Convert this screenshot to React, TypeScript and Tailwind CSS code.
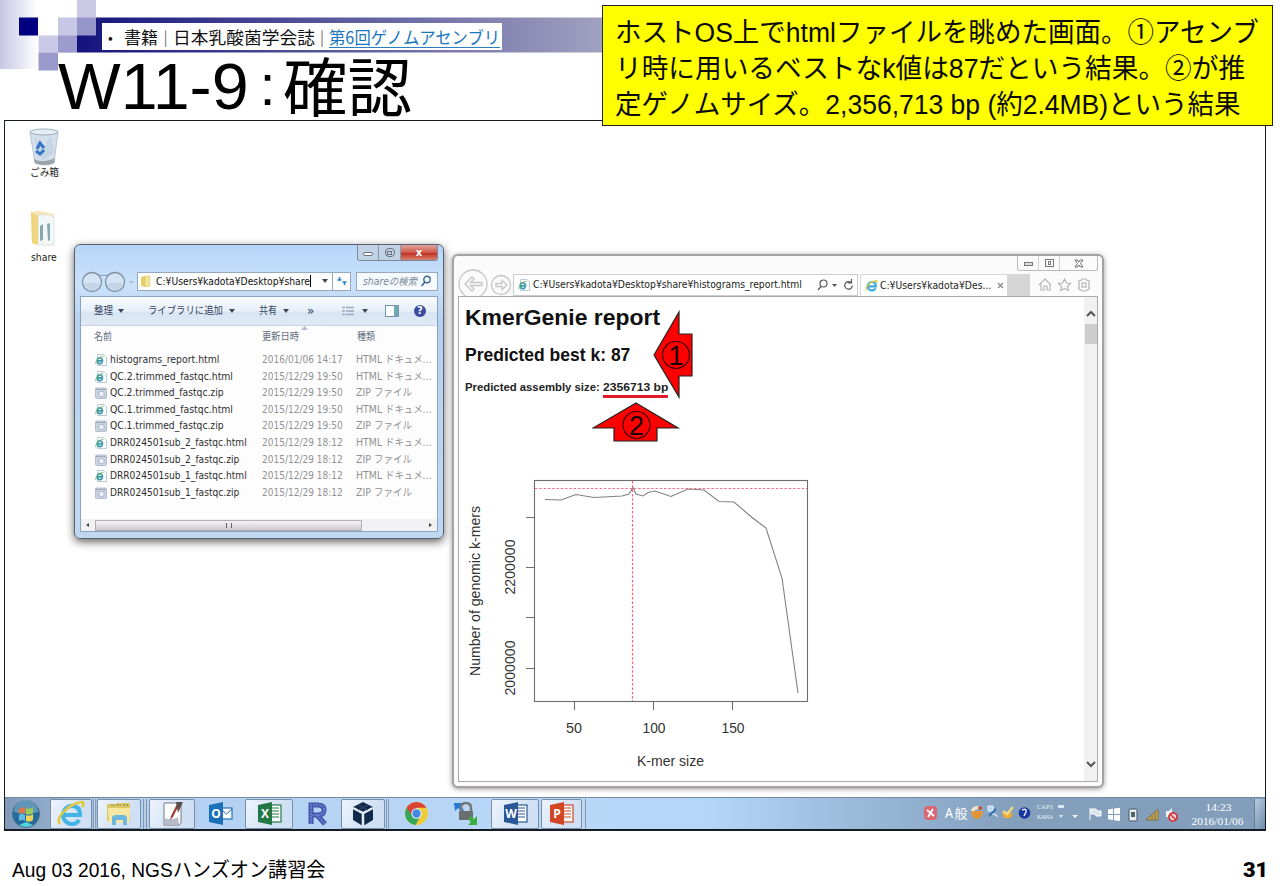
import { useLayoutEffect, useRef, useState, type ReactNode } from "react";

const GOTHIC = "font-['Liberation_Sans','Noto_Sans_CJK_JP',sans-serif]";
const CJK = "font-['Noto_Sans_CJK_JP',sans-serif]";
const UI = "font-['DejaVu_Sans','Noto_Sans_CJK_JP',sans-serif]";

/* One line of text, condensed or widened to fill exactly `w` pixels. */
function Fit({ w, className = "", children }: { w: number; className?: string; children: ReactNode }) {
  const ref = useRef<HTMLSpanElement>(null);
  const [k, setK] = useState(1);
  useLayoutEffect(() => {
    if (ref.current) setK(w / ref.current.offsetWidth);
  }, [w]);
  return (
    <span className={`block shrink-0 ${className}`} style={{ width: w }}>
      <span ref={ref} className="inline-block origin-left whitespace-nowrap" style={{ transform: `scaleX(${k})` }}>
        {children}
      </span>
    </span>
  );
}

function Caret() {
  return <svg width="6" height="4" viewBox="0 0 6 4" className="shrink-0"><path d="M0 0h6L3 4z" fill="#3c4654" /></svg>;
}

function IeGlyph({ size = 12 }: { size?: number }) {
  return (
    <svg width={size} height={size} viewBox="0 0 24 24" className="shrink-0">
      <path d="M5 13.500h15c.3-5-3-8-7.400-8S5 9 5 13.200 8.500 21 12.800 21c3 0 5.500-1.600 6.600-4" fill="none" stroke="#3fa9dc" strokeWidth="4" />
      <path d="M3 21C-1 17 9 4 21 3c2 0 1 3 0 4" fill="none" stroke="#e3c93e" strokeWidth="2.200" />
    </svg>
  );
}

function FileIcon({ zip }: { zip: boolean }) {
  return zip ? (
    <svg width="12" height="12" viewBox="0 0 12 12" className="shrink-0">
      <rect x=".5" y="1" width="11" height="10.500" rx="1" fill="#c9d2df" stroke="#a9b4c5" strokeWidth=".8" />
      <path d="M1 2.500h10" stroke="#8792a6" strokeDasharray="1.500 1" /><rect x="4" y="4.500" width="5" height="5" rx="1.500" fill="#eef2f8" stroke="#9eabc0" strokeWidth=".8" />
    </svg>
  ) : (
    <svg width="12" height="12" viewBox="0 0 12 12" className="shrink-0">
      <path d="M2.500.5h6.500l2.500 2.500v8.500h-9z" fill="#fbfdff" stroke="#a9bccb" strokeWidth=".8" />
      <path d="M2.500 6.800h5c0-4.200-5.300-3.700-5.300.2 0 3 4.300 3.500 5 1" fill="none" stroke="#3c9aa8" strokeWidth="1.700" />
      <path d="M.8 10C0 7 4 2.500 8.500 2.300" fill="none" stroke="#7fbf62" strokeWidth=".9" />
    </svg>
  );
}

const FILES: [string, number, string][] = [
  ["histograms_report.html", 109, "2016/01/06 14:17"],
  ["QC.2.trimmed_fastqc.html", 123, "2015/12/29 19:50"],
  ["QC.2.trimmed_fastqc.zip", 114, "2015/12/29 19:50"],
  ["QC.1.trimmed_fastqc.html", 123, "2015/12/29 19:50"],
  ["QC.1.trimmed_fastqc.zip", 114, "2015/12/29 19:50"],
  ["DRR024501sub_2_fastqc.html", 137, "2015/12/29 18:12"],
  ["DRR024501sub_2_fastqc.zip", 129, "2015/12/29 18:12"],
  ["DRR024501sub_1_fastqc.html", 137, "2015/12/29 18:12"],
  ["DRR024501sub_1_fastqc.zip", 129, "2015/12/29 18:12"],
];

function Header() {
  return (
    <header className="relative h-[120px] shrink-0">
      <svg className="absolute left-0 top-0" width="1280" height="71">
        <defs>
          <linearGradient id="fade"><stop offset="0" stopColor="#c6c6e6" /><stop offset="1" stopColor="#fff" /></linearGradient>
          <linearGradient id="bar"><stop offset="0" stopColor="#13137c" /><stop offset=".44" stopColor="#a2a2c0" /><stop offset="1" stopColor="#fff" /></linearGradient>
        </defs>
        <rect width="38" height="69" fill="url(#fade)" />
        <rect x="77" y="17.500" width="1203" height="35" fill="url(#bar)" />
        <rect x="19" y="17.500" width="19" height="18" fill="#000080" />
        <rect x="77" width="19" height="18" fill="#cacae7" />
        <rect x="58" y="17.500" width="19" height="35" fill="#c8c8e6" />
        <rect x="77" y="17.500" width="19" height="18" fill="#9696cb" />
        <rect x="38.500" y="35.500" width="19.500" height="17" fill="#cacae7" />
        <rect x="58" y="35.500" width="19" height="17" fill="#9c9ccf" />
        <rect x="38.500" y="52.500" width="19.500" height="18" fill="#9999cc" />
      </svg>
      <div className="relative flex flex-col pt-[23px]">
        <div className={`ml-[102px] flex h-[27px] w-[400px] items-center bg-white pl-[6px] text-[17px] leading-[24px] text-[#111] ${CJK}`}>
          <span className="w-4 text-[14px]">•</span>
          <Fit w={34}>書籍</Fit>
          <span className="w-[15px] text-center text-[15px] text-[#777]">|</span>
          <Fit w={142}>日本乳酸菌学会誌</Fit>
          <span className="w-[14px] text-center text-[15px] text-[#777]">|</span>
          <Fit w={171} className="h-[23px] border-b border-[#2a7fc0] text-[#1975bd]">第6回ゲノムアセンブリ</Fit>
        </div>
        <h1 className={`ml-[58px] flex h-[70px] items-center text-[65px] leading-[70px] text-black ${GOTHIC}`}>
          <Fit w={191} className="translate-y-[2px]">W11-9</Fit>
          <span className="w-[34px] pl-[3px] text-center text-[58px]">:</span>
          <Fit w={129} className={`-translate-y-[2px] text-[64px] ${CJK}`}>確認</Fit>
        </h1>
      </div>
      <aside className={`absolute left-[602px] top-[5px] z-20 flex h-[121px] w-[671px] flex-col border-[1.500px] border-[#222] bg-[#ffff00] pl-[12px] pt-[9px] text-[27px] leading-[36px] text-[#0a0a0a] ${GOTHIC}`}>
        <Fit w={644} className="h-[36px]">ホストOS上でhtmlファイルを眺めた画面。①アセンブ</Fit>
        <Fit w={630} className="h-[36px]">リ時に用いるベストなk値は87だという結果。②が推</Fit>
        <Fit w={626} className="h-[36px]">定ゲノムサイズ。2,356,713 bp (約2.4MB)という結果</Fit>
      </aside>
    </header>
  );
}

function Explorer() {
  return (
    <section className={`absolute left-[69px] top-[123px] flex h-[295px] w-[370px] flex-col rounded-[6px] border-[1.500px] border-[#56626f] bg-[linear-gradient(180deg,#b6d6f8_0,#cbe1fa_40px,#b5d1f0_75px,#c0d8f2_100%)] px-[5px] pb-[6px] shadow-[0_3px_8px_rgba(60,50,50,0.75)] ${UI}`}>
      <div className="flex h-[26px] items-start justify-end">
        <div className="flex h-[16px] w-[81px] overflow-hidden rounded-b-[3px] border border-t-0 border-[#7b8a9c]">
          <span className="flex w-[21px] items-center justify-center border-r border-[#8a9bad] bg-[#c2d2e5]"><i className="mt-[2px] h-[4px] w-[10px] rounded-sm border border-[#68727e] bg-white" /></span>
          <span className="flex w-[22px] items-center justify-center border-r border-[#8a9bad] bg-[#c2d2e5]"><i className="flex h-[9px] w-[10px] items-center justify-center rounded-sm border border-[#68727e]"><i className="h-[4px] w-[5px] border border-[#68727e]" /></i></span>
          <span className="flex flex-1 items-center justify-center bg-[linear-gradient(#e0a49b_0,#d0594a_50%,#bf3322_55%,#d8806f_100%)] text-[10px] font-bold leading-none text-white">x</span>
        </div>
      </div>
      <div className="flex h-[20px] items-center">
        <svg width="57" height="24" viewBox="0 0 57 24" className="shrink-0">
          <path d="M10 5q14 3 25 0" stroke="#8498ab" fill="none" />
          <circle cx="12" cy="13" r="9.500" fill="#d5e4f4" stroke="#7e8f9f" strokeWidth="1.300" /><circle cx="35" cy="13" r="9.500" fill="#d5e4f4" stroke="#7e8f9f" strokeWidth="1.300" />
          <path d="M5 14h14a7 7 0 0 1-14 0M28 14h14a7 7 0 0 1-14 0" fill="#c3d5e7" /><path d="M49 12h5l-2.500 3z" fill="#a6bdd2" />
        </svg>
        <div className="flex h-[19px] w-[214px] items-center border border-[#97aabd] bg-white">
          <svg width="10" height="13" viewBox="0 0 10 13" className="mx-[3px] shrink-0"><path d="M0 2l4-1v11l-4-1z" fill="#e6ce69" /><path d="M4 1h5v10l-5 1z" fill="#f4e39b" stroke="#d6bd5c" strokeWidth=".5" /></svg>
          <Fit w={154} className="ml-[2px] text-[10px] leading-[17px] text-[#111]">C:¥Users¥kadota¥Desktop¥share</Fit>
          <i className="mr-[11px] h-[12px] w-px bg-black" /><Caret />
          <span className="ml-1 flex h-full flex-1 items-center justify-center border-l border-[#97aabd]"><svg width="12" height="10" viewBox="0 0 12 10"><path d="M3.500 1v3h-2M3.500 4h2M8.500 9V6h2M8.500 6h-2" stroke="#277fbd" strokeWidth="1.600" fill="none" /></svg></span>
        </div>
        <div className="ml-[5px] flex h-[19px] flex-1 items-center border border-[#97aabd] bg-[#f6faff] pl-[6px]">
          <Fit w={54} className="text-[10px] italic leading-[17px] text-[#7c8794]">shareの検索</Fit>
          <svg width="12" height="12" viewBox="0 0 12 12" className="ml-[3px]"><circle cx="7" cy="4.500" r="3.200" fill="none" stroke="#3b6690" strokeWidth="1.400" /><path d="M5 7L1.500 11" stroke="#3b6690" strokeWidth="1.700" /></svg>
        </div>
      </div>
      <div className="mt-[5px] flex flex-1 flex-col border border-[#8ba3bb] bg-[#fdfdfe]">
        <div className="flex h-[29px] items-center border-b border-[#c4d2e2] bg-[linear-gradient(#f8fbff_0,#e6eff9_50%,#d8e5f3_55%,#e0eaf6_100%)] pl-[13px] text-[10.500px] text-[#34465e]">
          <Fit w={19}>整理</Fit><span className="ml-[5px] mr-[24px]"><Caret /></span>
          <Fit w={75}>ライブラリに追加</Fit><span className="ml-[6px] mr-[24px]"><Caret /></span>
          <Fit w={18}>共有</Fit><span className="ml-[6px] mr-[18px]"><Caret /></span>
          <span className="w-[35px] text-[12px] leading-none">»</span>
          <svg width="12" height="10" viewBox="0 0 12 10"><path d="M0 1.500h12M0 5h12M0 8.500h12" stroke="#98a8bc" strokeWidth="1.300" strokeDasharray="3 1 8 0" /></svg>
          <span className="ml-[8px] mr-[17px]"><Caret /></span>
          <svg width="14" height="12" viewBox="0 0 14 12" className="shrink-0"><rect x=".5" y=".5" width="13" height="11" fill="#fff" stroke="#7695aa" /><path d="M9 1h4v10H9z" fill="#6eaab5" /></svg>
          <span className="ml-[15px] flex h-[12px] w-[12px] shrink-0 items-center justify-center rounded-full bg-[#3c4b9f] text-[10px] font-bold leading-none text-white">?</span>
        </div>
        <div className="relative flex h-[22px] items-center pl-[13px] text-[10.500px] text-[#64707e]">
          <Fit w={18} className="mr-[150px]">名前</Fit><Fit w={37} className="mr-[58px]">更新日時</Fit><Fit w={18}>種類</Fit>
          <svg className="absolute left-[220px] top-0" width="7" height="4"><path d="M0 4L3.500 0 7 4z" fill="#b0bccb" /></svg>
        </div>
        <div className="flex flex-col pt-[4px]">
          {FILES.map(([name, w, date]) => (
            <div key={name} className="flex h-[16.560px] items-center pl-[14px] text-[10px] leading-[16px]">
              <FileIcon zip={name.endsWith("zip")} />
              <span className="ml-[3px] w-[152px] text-[#2e2e2e]"><Fit w={w}>{name}</Fit></span>
              <Fit w={81} className="mr-[13px] text-[#929292]">{date}</Fit>
              {name.endsWith("zip") ? <Fit w={56} className="text-[#929292]">ZIP ファイル</Fit> : <Fit w={76} className="text-[#929292]">HTML ドキュメ...</Fit>}
            </div>
          ))}
        </div>
        <div className="mt-auto flex h-[12px] items-center bg-[#f1f0f2]">
          <svg width="14" height="8"><path d="M8 2v4L5 4z" fill="#444" /></svg>
          <span className="flex h-[11px] w-[267px] items-center justify-center border border-[#b1aeb5] bg-[linear-gradient(#f4f2f5_0,#e2dfe4_50%,#cbc7cd_100%)]"><i className="h-[5px] w-[6px] border-x border-[#666] bg-[linear-gradient(90deg,transparent_40%,#666_40%,#666_60%,transparent_60%)]" /></span>
          <svg width="10" height="8" className="ml-auto mr-[1px]"><path d="M3 2v4l3-2z" fill="#444" /></svg>
        </div>
      </div>
    </section>
  );
}

function KmerChart() {
  return (
    <svg className="block font-['Liberation_Sans',sans-serif]" width="380" height="330" viewBox="450 460 380 330" fill="#333" fontSize="14.500">
      <g fill="none" stroke="#6d6d6d" strokeWidth="1.100">
        <rect x="534.500" y="481.500" width="273" height="221" />
        <path d="M526 518.500h8M526 568.500h8M526 618.500h8M526 669.500h8M574.500 702v9M653.500 702v9M732.500 702v9" />
        <path d="M545 500.500l16 .5 15-5.500 18 3 28-1.500 7-2 4-6.500 3 6.500 7 2 5-3.500 7-1.500 16 5.500 17-7.500 16 1 15 11.500 15 .5 18 15.500 14 10.500 16 50 16 115" stroke="#808080" />
      </g>
      <line x1="535" y1="489.500" x2="807" y2="489.500" stroke="#f4708a" strokeWidth="1.200" strokeDasharray="2.500 1.800" />
      <line x1="632.500" y1="482" x2="632.500" y2="702" stroke="#f4607c" strokeWidth="1.200" strokeDasharray="2.500 1.800" />
      <text x="574" y="733.500" textAnchor="middle" textLength="16" lengthAdjust="spacingAndGlyphs">50</text>
      <text x="654" y="733.500" textAnchor="middle" textLength="23" lengthAdjust="spacingAndGlyphs">100</text>
      <text x="733" y="733.500" textAnchor="middle" textLength="23" lengthAdjust="spacingAndGlyphs">150</text>
      <text x="670.500" y="767" textAnchor="middle" textLength="67" lengthAdjust="spacingAndGlyphs">K-mer size</text>
      <text transform="translate(514.500 568) rotate(-90)" textAnchor="middle" textLength="55" lengthAdjust="spacingAndGlyphs">2200000</text>
      <text transform="translate(514.500 669) rotate(-90)" textAnchor="middle" textLength="55" lengthAdjust="spacingAndGlyphs">2000000</text>
      <text transform="translate(480 592) rotate(-90)" textAnchor="middle" textLength="170" lengthAdjust="spacingAndGlyphs">Number of genomic k-mers</text>
    </svg>
  );
}

function Browser() {
  return (
    <section className={`absolute left-[447px] top-[133px] flex h-[534px] w-[652px] flex-col rounded-[6px] border-2 border-[#a3a3a3] bg-[#fbfbfb] px-[4px] pb-[4px] shadow-[0_1px_5px_rgba(90,80,80,0.6)] ${UI}`}>
      <div className="flex h-[19px] items-start justify-end">
        <div className="flex h-[15px] w-[81px] rounded-b-[3px] border border-t-0 border-[#bcbcbc]">
          <span className="flex w-[21px] items-center justify-center border-r border-[#d0d0d0]"><i className="mt-[2px] h-[4px] w-[9px] border border-[#777] bg-[#ddd]" /></span>
          <span className="flex w-[21px] items-center justify-center border-r border-[#d0d0d0]"><i className="flex h-[8px] w-[9px] items-center justify-center border border-[#777]"><i className="h-[4px] w-[3px] border border-[#777]" /></i></span>
          <span className="flex flex-1 items-center justify-center"><svg width="10" height="9" viewBox="0 0 10 9"><path d="M1 1h2.500L5 3l1.500-2H9L6.500 4.500 9 8H6.500L5 6 3.500 8H1l2.500-3.500z" fill="#fff" stroke="#666" /></svg></span>
        </div>
      </div>
      <div className="flex h-[22px] items-center">
        <svg width="55" height="32" viewBox="0 0 55 32" className="shrink-0" fill="none" stroke="#c6c6c6" strokeWidth="1.300">
          <circle cx="15" cy="15" r="14" fill="#fafafa" /><circle cx="43" cy="16" r="9.500" fill="#fafafa" />
          <path d="M7 15l7-7 2 2-3.500 3.500H24v3H12.500L16 20l-2 2zM49 16l-5-4.500v3h-6v3h6v3z" />
        </svg>
        <div className="flex h-[22px] w-[345px] items-center border border-[#ccc] bg-white pl-[4px]">
          <FileIcon zip={false} />
          <Fit w={269} className="ml-[3px] text-[10px] leading-[20px] text-[#222]">C:¥Users¥kadota¥Desktop¥share¥histograms_report.html</Fit>
          <svg width="38" height="12" viewBox="0 0 38 12" className="ml-[15px]" fill="none" stroke="#555" strokeWidth="1.200"><circle cx="6.500" cy="4.500" r="3.500" /><path d="M4 7.500L1 11M34 3.500a3.800 3.800 0 1 0 1.300 3M34.500 0v4h-4" /><path d="M15 5h5l-2.500 3z" fill="#555" stroke="none" /></svg>
        </div>
        <div className="ml-[2px] flex h-[22px] w-[148px] items-center border border-b-0 border-[#d6d6e2] bg-white pl-[4px]">
          <IeGlyph size={13} /><Fit w={111} className="ml-[2px] text-[10px] leading-[20px] text-[#222]">C:¥Users¥kadota¥Des...</Fit>
          <svg width="7" height="7" className="ml-[6px]"><path d="M1 1l5 5M6 1L1 6" stroke="#888" strokeWidth="1.200" /></svg>
        </div>
        <span className="h-[22px] w-[22px] bg-[#d6d6d6]" />
        <svg width="54" height="16" viewBox="0 0 54 16" className="ml-[7px]" fill="none" stroke="#b4b4b4" strokeWidth="1.200">
          <path d="M2 8l6-6 6 6M4 7v6h3V9h3v4h3V7M27.500 2l2 4 4 .5-3 3 .8 4-3.800-2-3.800 2 .8-4-3-3 4-.5z" /><path d="M42 3.500h2l1-1.500h4l1 1.500h2v9h-2l-1 1.500h-4l-1-1.500h-2z" /><rect x="45" y="6" width="4" height="4" />
        </svg>
      </div>
      <div className={`relative flex flex-1 border border-[#a9a9a9] bg-white ${GOTHIC}`}>
        <div className="flex w-[625px] flex-col pl-[6px] text-[#111]">
          <Fit w={195} className="mt-[5px] h-[32px] text-[22px] font-bold leading-[32px]">KmerGenie report</Fit>
          <Fit w={165} className="mt-[9px] h-[25px] text-[17.500px] font-bold leading-[25px]">Predicted best k: 87</Fit>
          <div className="mt-[10px] flex h-[20px] text-[11px] font-bold leading-[18px] text-[#222]">
            <Fit w={138}>Predicted assembly size:&nbsp;</Fit>
            <Fit w={65} className="border-b-[3px] border-[#e21a2c]">2356713 bp</Fit>
          </div>
          <div className="-ml-[15px] mt-[61px] h-[322px] overflow-hidden"><KmerChart /></div>
        </div>
        <div className="flex flex-1 flex-col items-center bg-[#f1f1f1] pt-[13px]">
          <svg width="10" height="7"><path d="M1 6l4-4 4 4" stroke="#555" strokeWidth="2" fill="none" /></svg>
          <span className="mt-[7px] h-[20px] w-[12px] bg-[#cdcdcd]" />
          <svg width="10" height="7" className="mb-[13px] mt-auto"><path d="M1 1l4 4 4-4" stroke="#555" strokeWidth="2" fill="none" /></svg>
        </div>
        <svg className={`absolute left-[133px] top-[13px] ${GOTHIC}`} width="104" height="134" viewBox="592 310 104 134" textAnchor="middle" fontSize="27">
          <path d="M654 355l25-43v22h13v42h-13v21zM636 403l42 25h-21v13h-43v-13h-21z" fill="#fd0000" stroke="#222" strokeWidth="1.200" />
          <circle cx="676" cy="355" r="13.500" fill="none" stroke="#3c0000" strokeWidth="1.200" /><circle cx="636.500" cy="425" r="13.500" fill="none" stroke="#3c0000" strokeWidth="1.200" />
          <text x="676" y="364.500" fill="#180000">1</text><text x="636.500" y="434.500" fill="#180000">2</text>
        </svg>
      </div>
    </section>
  );
}

function OfficeIcon({ letter, color, mail }: { letter: string; color: string; mail?: boolean }) {
  return (
    <svg width="25" height="25" viewBox="0 0 25 25" className="font-['Open_Sans',sans-serif]">
      <rect x="12" y={mail ? 7 : 4} width="12" height={mail ? 11 : 17} fill="#fff" stroke={color} strokeWidth="1.200" />
      {mail ? <path d="M13 8l5.500 5L24 8" fill="none" stroke={color} /> : <path d="M15 7h7M15 10h7M15 13h7M15 16h7" stroke={color} strokeWidth="1.200" />}
      <path d="M1 4l14-3v23L1 21z" fill={color} />
      <text x="8" y="17" textAnchor="middle" fontSize="12" fontWeight="700" fill="#fff">{letter}</text>
    </svg>
  );
}

function Slot({ w, open = false, children }: { w: number; open?: boolean; children: ReactNode }) {
  return (
    <span className={`flex h-[30px] shrink-0 items-center justify-center ${open ? "rounded-[2px] border border-[#7990aa] bg-[linear-gradient(120deg,#edf4fd_0,#cfe0f4_70%)]" : ""}`} style={{ width: w }}>
      {children}
    </span>
  );
}

function Tray() {
  return (
    <div className="ml-auto flex items-center text-white">
      <svg width="322" height="28" viewBox="922 800 322 28" className="shrink-0 font-['Liberation_Serif','Noto_Sans_CJK_JP',serif]">
        <rect x="923" y="806" width="13" height="14" rx="4" fill="#d96672" /><path d="M926 810l7 6M932 809l-5 8" stroke="#fff" strokeWidth="1.800" />
        <text x="948" y="818" fontSize="14" textAnchor="middle" textLength="8" lengthAdjust="spacingAndGlyphs" fill="#fff" className="font-['Noto_Sans',sans-serif]">A</text><text x="960" y="818" fontSize="13" textAnchor="middle" fill="#fff">般</text>
        <path d="M970 811h12q-1 8-6 8t-6-8z" fill="#e19535" /><path d="M971 811q3-5 9-3" stroke="#ede5ce" strokeWidth="3" fill="none" /><circle cx="979" cy="808" r="2" fill="#bd5544" />
        <path d="M987 806h5v5h-5zM991 814q4-1 6 3" fill="#b7d6f4" stroke="#e5f4ff" /><path d="M988 816l7-7" stroke="#3570af" strokeWidth="2" />
        <path d="M1001 813h11l-2 5h-7z" fill="#e7ad38" /><path d="M1002 811l4 3 6-7" stroke="#f4d985" strokeWidth="2.500" fill="none" />
        <circle cx="1023.500" cy="813" r="5.800" fill="#17359d" /><path d="M1021 810q5-2 4 2l-2 4" stroke="#e4ecff" strokeWidth="1.500" fill="none" />
        <text x="1036" y="809" fontSize="6" fill="#edf3fa" textLength="16">CAPS</text><text x="1036" y="819" fontSize="6" fill="#edf3fa" textLength="16">KANA</text><path d="M1057 805h6v3h-6zM1058 815h4l-2 3z" fill="#dce6f1" />
        <path d="M1071 815h6l-3 3z" fill="#f1f6fa" /><path d="M1089 808v12M1090 809h5l1 2h4v5h-5l-1-2h-4z" stroke="#fff" fill="#d7e3ee" />
        <path d="M1107 809.500l5-.8v5.300h-5zM1113 808.500l6-.8v6.300h-6zM1107 815h5v5l-5-.7zM1113 815h6v6l-6-.8z" fill="#fff" />
        <rect x="1128" y="809" width="8" height="12" rx="1" fill="#e8eee9" stroke="#45556c" /><path d="M1130 812h4v5h-4z" fill="#51616d" />
        <path d="M1145 820l12-11v11z" fill="#c9a54d" stroke="#7c704d" /><path d="M1151 820v-5M1154 820v-8" stroke="#776c48" />
        <path d="M1165 811h3l3-3v12l-3-3h-3z" fill="#edf2f5" /><circle cx="1172" cy="817" r="4" fill="#f4d5d2" stroke="#d73038" strokeWidth="1.700" /><path d="M1169 814l6 6" stroke="#d73038" strokeWidth="1.500" />
        <text x="1217.500" y="810.500" fontSize="11" textAnchor="middle" textLength="26" lengthAdjust="spacingAndGlyphs" fill="#fff">14:23</text>
        <text x="1216.500" y="825" fontSize="11" textAnchor="middle" textLength="52" lengthAdjust="spacingAndGlyphs" fill="#fff">2016/01/06</text>
      </svg>
      <span className="ml-[9px] h-[30px] w-[11px] border-l border-[#617e9d] bg-[linear-gradient(115deg,#b9cbdc,#6d8baa)]" />
    </div>
  );
}

function Taskbar() {
  return (
    <div className="mt-auto flex h-[32px] items-center border-t border-[#718ba7] bg-[linear-gradient(90deg,#8099b8_0,#93aecd_4%,#b3d0f1_10%,#b9d7f7_45%,#b5d5f7_56%,#9ab9d9_68%,#839fbc_80%,#829ebb_100%)]">
      <Slot w={45}>
        <svg width="30" height="30" viewBox="0 0 30 30" className="mr-[4px]"><circle cx="15" cy="15" r="13.500" fill="#256b99" stroke="#52708b" /><path d="M3 13a12 12 0 0 1 24 0q-12 4-24 0" fill="#77a9c8" opacity=".7" /><path d="M8 10q3-3 6-1v6q-3-2-6 0z" fill="#e37442" /><path d="M15 9q4 2 7-1v6q-3 3-7 1z" fill="#9acb59" /><path d="M8 16q3-2 6 0v6q-3-2-6 0z" fill="#61bde8" /><path d="M15 16q4 2 7-1v6q-3 3-7 1z" fill="#f1d45b" /><path d="M8 26q7 4 14 0l-7-3z" fill="#51d3dc" /></svg>
      </Slot>
      <Slot w={42} open>
        <svg width="30" height="29" viewBox="0 0 30 29"><path d="M8 16h16c0-6-3-9-8-9s-9 4-9 9 4 9 9 9c4 0 6-2 7-4" fill="none" stroke="#41b3e6" strokeWidth="4" /><path d="M4 25C-1 19 12 5 26 3c3 0 1 4 0 5" fill="none" stroke="#e3c93e" strokeWidth="2.500" /></svg>
      </Slot>
      <i className="mx-px h-[30px] w-[3px] border-x border-[#8199b3] bg-[#c7daf0]" />
      <Slot w={44} open><svg width="28" height="26" viewBox="0 0 28 26"><path d="M2 3h8l2-1h13v18H2z" fill="#ddc866" /><path d="M3 7h22l-1 15H4z" fill="#f6e8a2" /><path d="M6 4h4M12 4h4M18 4h5" stroke="#9c8f53" strokeWidth="1.500" strokeDasharray="2 1" /><path d="M7 24v-7q0-3 4-3h7q4 0 4 3v7h-4v-5h-7v5z" fill="#6ab8e0" /></svg></Slot>
      <i className="mx-[2px] h-[30px] w-[4px] border-x border-[#8199b3] bg-[#b9cee6]" />
      <Slot w={46} open><svg width="24" height="25" viewBox="0 0 24 25"><path d="M4 2h17v20l-2 2H4z" fill="#fff" stroke="#778" /><path d="M4 17q8 3 14-1l1 7H4z" fill="#b5bdc8" /><path d="M20 2l-7 14-3 3 1-4 6-12z" fill="#a33d33" /><path d="M16 1h7l-5 11z" fill="#59514f" /></svg></Slot>
      <Slot w={50}><OfficeIcon letter="O" color="#1b70ba" mail /></Slot>
      <Slot w={48} open><OfficeIcon letter="X" color="#217844" /></Slot>
      <Slot w={48}><svg width="25" height="27" viewBox="0 0 25 27"><path d="M6 24V5h7q6 0 6 5t-6 5H6M12 15l8 9" fill="none" stroke="#4359b0" strokeWidth="5" /><path d="M6 24V5h7q6 0 6 5t-6 5H6M12 15l8 9" fill="none" stroke="#6e87d0" strokeWidth="1.600" strokeDasharray="2 1" /></svg></Slot>
      <Slot w={44} open><svg width="24" height="26" viewBox="0 0 24 26"><path d="M12 1l10 5v13l-10 6-10-6V6z" fill="#10294a" /><path d="M2 7l10 5 10-5M12 12v13" stroke="#e2edf8" strokeWidth="2.500" fill="none" /><path d="M7 4l10 5M17 4L7 9" stroke="#2f4865" /></svg></Slot>
      <i className="ml-px h-[30px] w-[3px] border-x border-[#8199b3] bg-[#c0d7ef]" />
      <Slot w={54}><svg width="25" height="25" viewBox="0 0 24 24"><circle cx="12" cy="12" r="11" fill="#edcc39" /><path d="M2.500 6.500A11 11 0 0 1 21.500 6.500H12L7.200 15z" fill="#d94335" /><path d="M2.500 6.500A11 11 0 0 0 11 23l5-8.500H8z" fill="#35a657" /><circle cx="12" cy="12" r="5" fill="#f1f4f8" /><circle cx="12" cy="12" r="4" fill="#4486e4" /></svg></Slot>
      <Slot w={46}><svg width="26" height="26" viewBox="0 0 26 26"><path d="M1 2h8L7 5l4 4-2 2-4-4-3 3z" fill="#237bd4" /><path d="M8 11V7q0-5 5-5t5 5v4" fill="none" stroke="#737879" strokeWidth="2.500" /><rect x="6" y="10" width="14" height="9" rx="1" fill="#696e6e" /><path d="M24 24h-9l3-3-3-3 3-3 3 3 3-3z" fill="#3bae41" /></svg></Slot>
      <i className="w-[2px]" />
      <Slot w={48} open><OfficeIcon letter="W" color="#2b5797" /></Slot>
      <i className="w-[2px]" />
      <Slot w={41} open><OfficeIcon letter="P" color="#d24625" /></Slot>
      <i className="h-[30px] w-[4px] border-r border-[#8199b3] bg-[#c0d7ef]" />
      <Tray />
    </div>
  );
}

export default function App() {
  return (
    <div className={`flex h-[886px] w-[1280px] flex-col overflow-hidden bg-white ${GOTHIC}`}>
      <Header />
      <main className="relative ml-[4px] flex h-[711px] w-[1262px] shrink-0 flex-col border-[1.500px] border-b-2 border-[#161b23] bg-white">
        <div className={`flex w-[78px] flex-col items-center pt-[7px] text-[10px] leading-[16px] text-[#222] ${UI}`}>
          <svg width="30" height="38" viewBox="0 0 30 38"><path d="M1 4h28l-4 31q-10 4-19 0z" fill="#d3dfea" stroke="#b9c6d3" /><ellipse cx="15" cy="4" rx="14" ry="3" fill="#e6eef5" stroke="#9eaebb" /><path d="M6 8l8 12 8-13 3 17-11 8L7 23z" fill="#c0d2e5" opacity=".8" /><path d="M8 21l3-6 4 5M15 22l-4 4-4-3" fill="none" stroke="#3775c4" strokeWidth="3" /><path d="M5 31q10 5 21-1l-1 5q-9 4-19 0z" fill="#9ba4ac" /></svg>
          <Fit w={29} className="mt-[-1px]">ごみ箱</Fit>
          <svg width="28" height="37" viewBox="0 0 28 37" className="mt-[29px]"><path d="M1 2l8-1 15 3v30H2z" fill="#f6e6b6" /><path d="M8 5h12l4 3v27H8z" fill="#f3f7f7" stroke="#dde4e5" /><path d="M10 16l3-2v16l-3 1zM17 14l3-1v17l-2 1z" fill="#86aaaa" /><path d="M1 2l7 4v29l-6-2z" fill="#f0d680" /></svg>
          <Fit w={26} className="mt-[3px]">share</Fit>
        </div>
        <Explorer />
        <Browser />
        <Taskbar />
      </main>
      <footer className="flex h-[55px] shrink-0 items-start justify-between pl-[12px] pr-[12px] pt-[24px] text-[20px] leading-[30px] text-black">
        <Fit w={314}>Aug 03 2016, NGSハンズオン講習会</Fit>
        <Fit w={25} className="font-['Roboto',sans-serif] text-[20px] font-black">31</Fit>
      </footer>
    </div>
  );
}
